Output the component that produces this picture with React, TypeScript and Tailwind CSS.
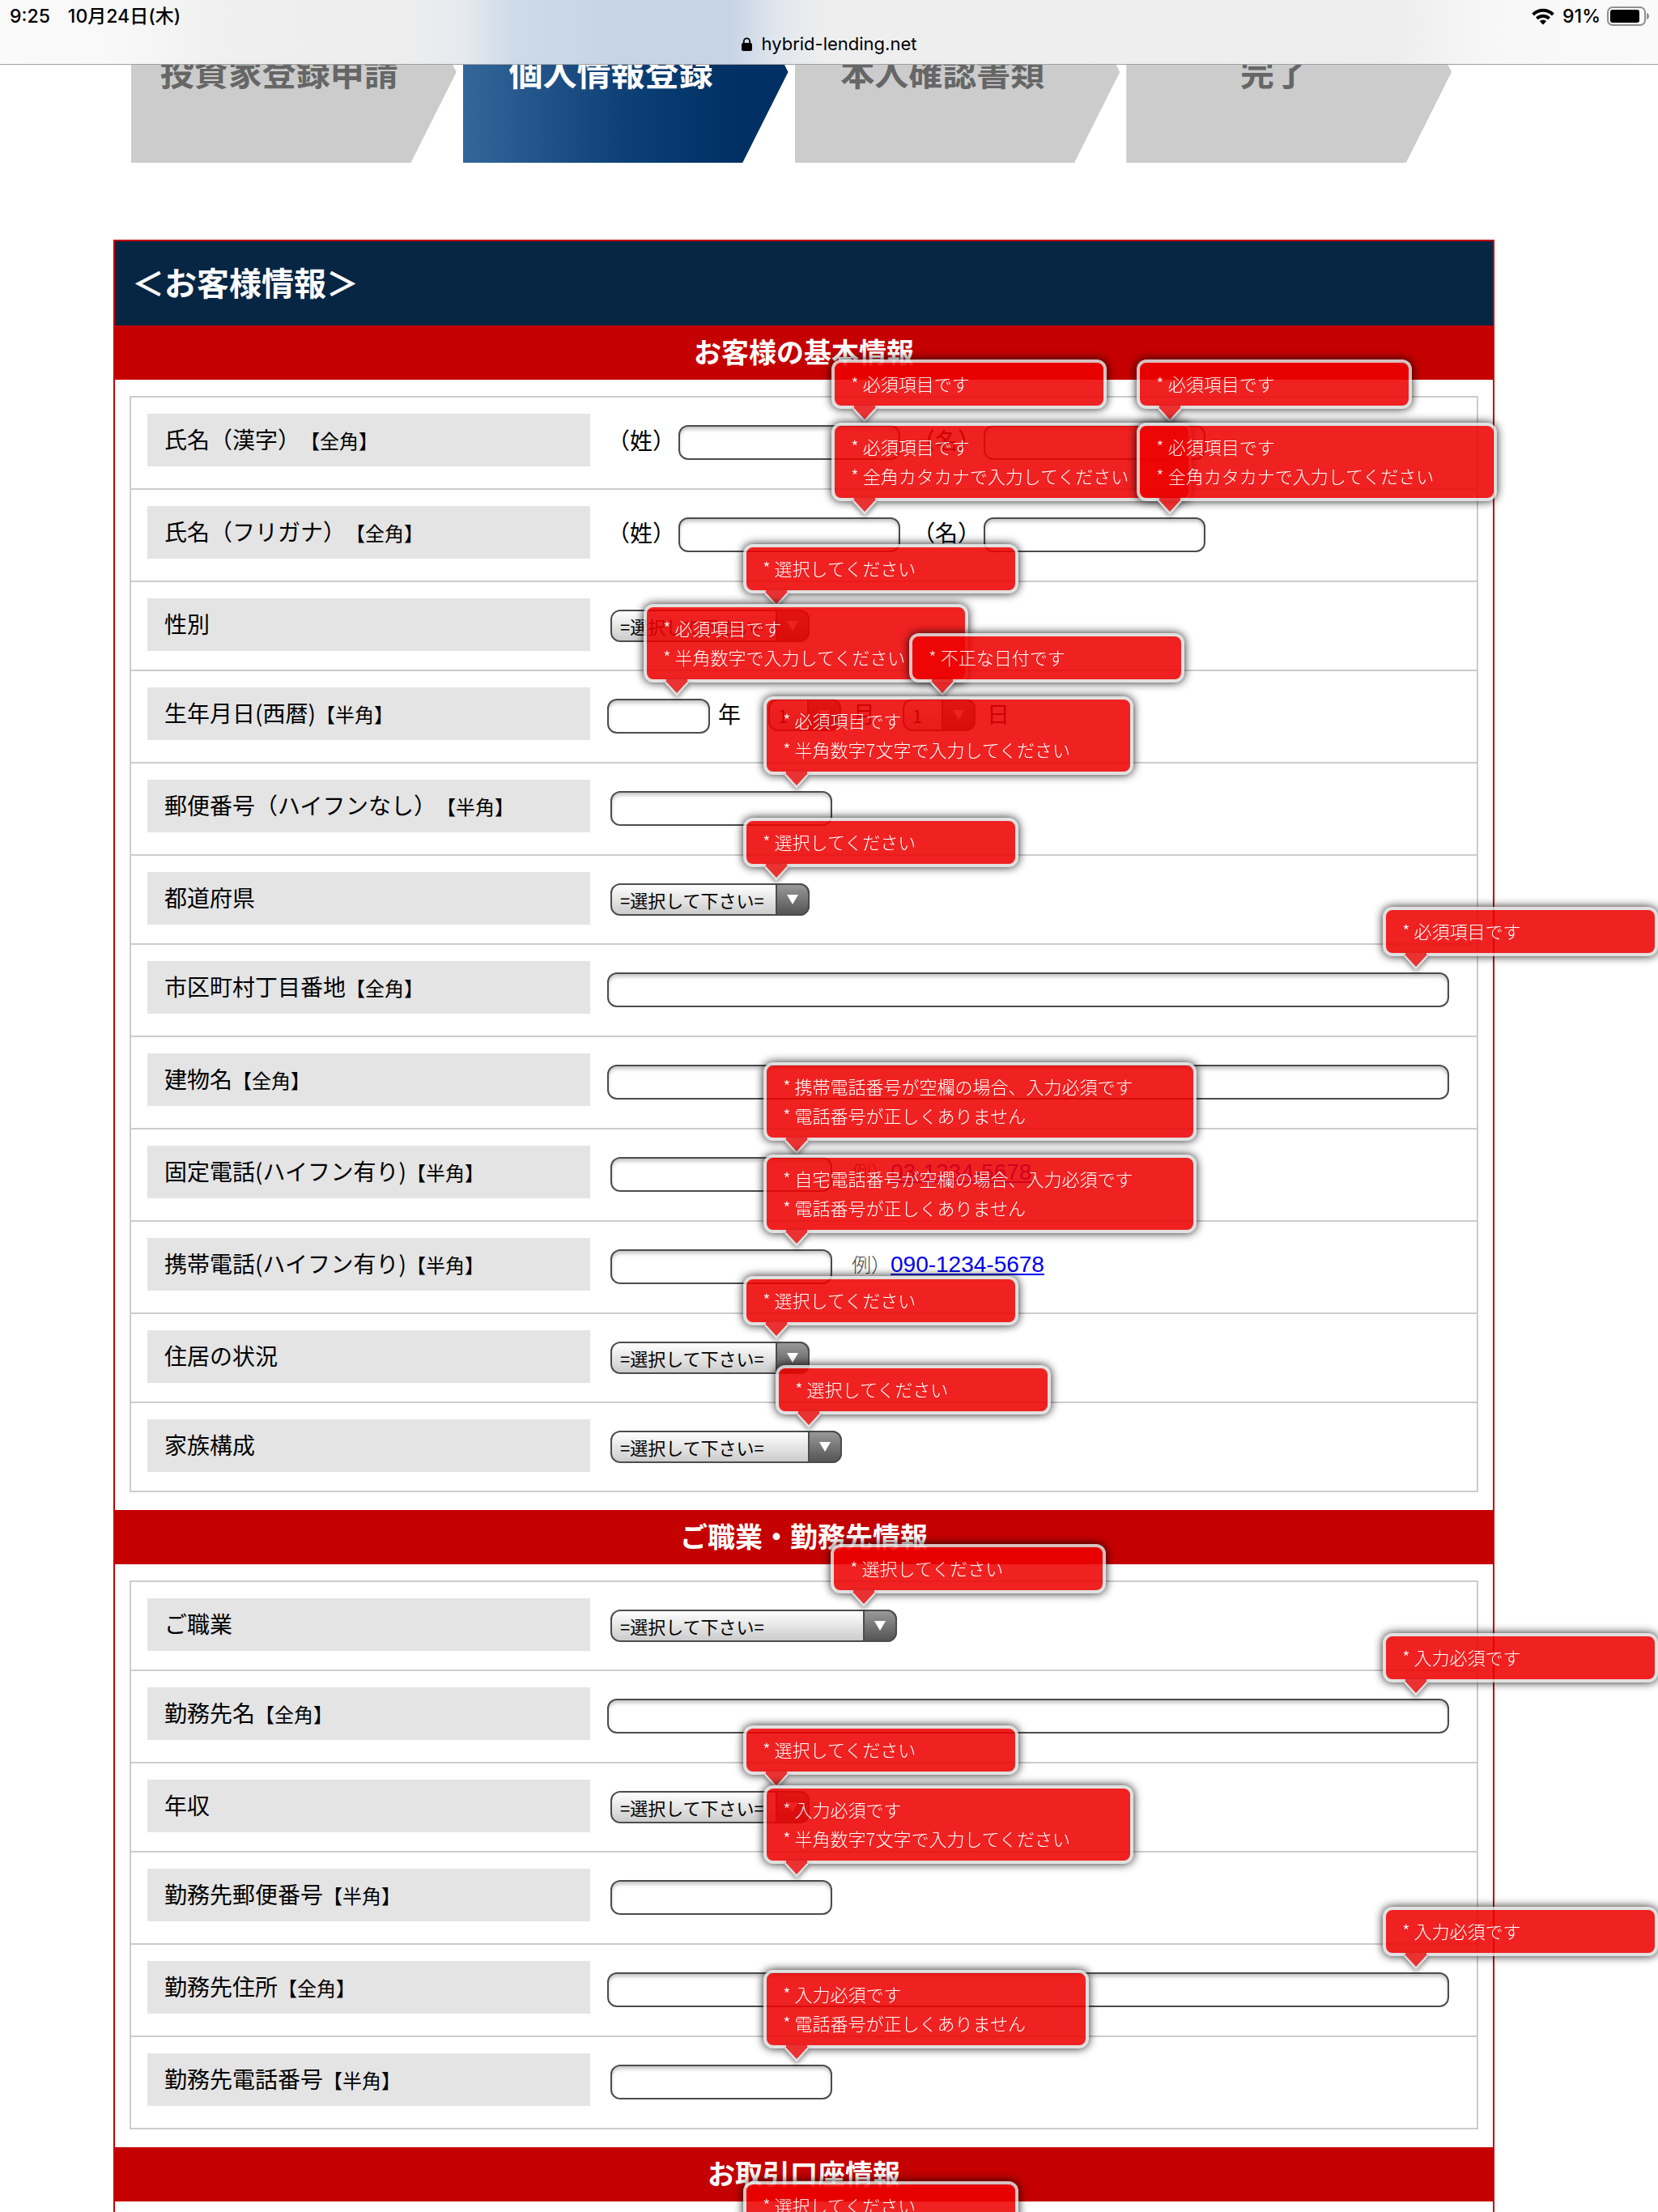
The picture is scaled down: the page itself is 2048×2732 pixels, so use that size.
import { createContext, useContext, useId, type ReactNode } from "react";

const FieldId = createContext<string | undefined>(undefined);

type TipProps = { lines: string[]; shift?: "near" | "far" };

function Tip({ lines, shift = "near" }: TipProps) {
  return (
    <div
      role="alert"
      className={`absolute bottom-[calc(100%+20px)] z-10 opacity-[0.87] ${
        shift === "far" ? "left-[calc(100%-85px)]" : "left-[calc(100%-82px)]"
      }`}
    >
      <div className="min-w-[340px] rounded-xl border-4 border-[#dddddd] bg-[#ee0101] pt-[7px] pr-[74px] pb-[10px] pl-5 text-[22px] leading-9 font-light whitespace-nowrap text-white shadow-[0_0_12px_#000000]">
        {lines.map((line) => (
          <p key={line}>* {line}</p>
        ))}
      </div>
      <svg
        className="absolute top-[calc(100%-4px)] left-[26px] drop-shadow-[0_3px_3px_rgba(0,0,0,0.5)]"
        width="30"
        height="21"
        viewBox="0 0 30 21"
        aria-hidden="true"
      >
        <path d="M0 4h30L15 21z" fill="#dddddd" />
        <path d="M2 0h26v3L15 17 2 3z" fill="#e81414" />
      </svg>
    </div>
  );
}

const inputBox =
  "block h-[43px] rounded-xl border-2 border-[#4c4c4c] bg-white px-2 text-[22px] shadow-[inset_0_4px_5px_-1px_rgba(0,0,0,0.25)]";

function TextField({ size = "medium", name, tip }: { size?: "short" | "medium" | "full"; name?: string; tip?: string[] }) {
  const id = useContext(FieldId);
  const outer = size === "full" ? "flex-1 mr-[34px]" : size === "short" ? "w-[127px]" : "ml-1 w-[274px]";
  return (
    <div className={`relative ${outer}`}>
      <input id={name ? undefined : id} aria-label={name} type="text" className={`${inputBox} w-full`} />
      {tip && <Tip lines={tip} shift={size === "medium" ? "far" : "near"} />}
    </div>
  );
}

function SelectField({
  size = "medium",
  name,
  option = "=選択して下さい=",
  tip,
}: {
  size?: "tiny" | "medium" | "large" | "wide";
  name?: string;
  option?: string;
  tip?: string[];
}) {
  const id = useContext(FieldId);
  const widths = { tiny: "w-[90px]", medium: "ml-1 w-[246px]", large: "ml-1 w-[286px]", wide: "ml-1 w-[354px]" };
  return (
    <div className={`relative ${widths[size]}`}>
      <select
        id={name ? undefined : id}
        aria-label={name}
        className="block h-10 w-full appearance-none rounded-xl border-2 border-[#4c4c4c] bg-linear-to-b from-white to-[#cccccc] pl-[10px] text-[22px] text-black"
      >
        <option>{option}</option>
      </select>
      <span className="pointer-events-none absolute inset-y-0 right-0 flex w-[42px] items-center justify-center rounded-r-xl border-2 border-[#4c4c4c] bg-linear-to-b from-[#999999] to-[#555555]">
        <svg width="14" height="12" viewBox="0 0 14 12" aria-hidden="true">
          <path d="M0 0h14L7 12z" fill="#ffffff" />
        </svg>
      </span>
      {tip && <Tip lines={tip} />}
    </div>
  );
}

function Row({ label, note, low, children }: { label: string; note?: string; low?: boolean; children: ReactNode }) {
  const id = useId();
  return (
    <FieldId.Provider value={id}>
      <div className={`flex items-start pt-5 pl-5 ${low ? "pb-[23px]" : "pb-[27px]"}`}>
        <label
          htmlFor={id}
          className="block h-[65px] w-[547px] shrink-0 bg-[#e4e4e4] px-[21px] text-[28px] leading-[63px] [text-spacing-trim:space-all]"
        >
          {label}
          {note && <span className="text-[24px]">【{note}】</span>}
        </label>
        <div className="ml-[21px] flex flex-1 items-start pt-[14px] text-[28px] leading-9">{children}</div>
      </div>
    </FieldId.Provider>
  );
}

function Section({ title, children }: { title: string; children: ReactNode }) {
  return (
    <section className="pb-[22px]">
      <h2 className="flex h-[67px] items-center justify-center bg-[#c40000] pb-1 text-[34px] font-bold text-white">
        {title}
      </h2>
      <div className="mt-5 mr-[18px] ml-[18px] divide-y-2 divide-[#cccccc] border-2 border-[#cccccc]">{children}</div>
    </section>
  );
}

const REQUIRED = "必須項目です";
const INPUT_NEEDED = "入力必須です";
const CHOOSE = "選択してください";
const BAD_PHONE = "電話番号が正しくありません";
const KATAKANA = "全角カタカナで入力してください";
const ZIP = "半角数字7文字で入力してください";

function NamePair({ tip }: { tip: string[] }) {
  return (
    <>
      <span>（姓）</span>
      <TextField name="姓" tip={tip} />
      <span className="ml-[15px]">（名）</span>
      <TextField name="名" tip={tip} />
    </>
  );
}

function Example({ phone }: { phone: string }) {
  return (
    <span className="ml-6 text-[24px] font-light text-[#444444]">
      例）
      <a
        href={`tel:${phone}`}
        className="font-['Liberation_Sans',sans-serif] text-[28px] font-normal text-[#0000ee] underline underline-offset-2"
      >
        {phone}
      </a>
    </span>
  );
}

function StatusBar() {
  return (
    <header className="relative z-20 h-20 border-b border-[#a0a0a0] bg-[linear-gradient(90deg,#fafafa_0%,#f8f8f8_7%,#efefef_14%,#ededed_24%,#e6eaee_28%,#ccdae9_31%,#c6d4e6_37%,#c6d4e6_44%,#e2e7ed_47%,#eeeeee_50%,#ededed_84%,#f7f7f7_90%,#fafafa_100%)] font-['Inter','Noto_Sans_CJK_JP',sans-serif] text-black">
      <div className="flex h-10 items-center justify-between pr-[10px] pl-3 text-[23px] font-medium">
        <div className="flex gap-[22px]">
          <span>9:25</span>
          <span>10月24日(木)</span>
        </div>
        <div className="flex items-center gap-2">
          <div className="flex items-center gap-[10px]">
            <svg width="28" height="21" viewBox="0 0 28 21" aria-hidden="true">
              <g fill="none" stroke="#000000" strokeWidth="4">
                <path d="M1.6 8a17.5 17.5 0 0 1 24.8 0" />
                <path d="M6.4 12.8a10.8 10.8 0 0 1 15.2 0" />
              </g>
              <path d="M9.8 16.3a6 6 0 0 1 8.4 0L14 20.5z" fill="#000000" />
            </svg>
            <span>91%</span>
          </div>
          <svg width="53" height="24" viewBox="0 0 53 24" aria-hidden="true">
            <rect x="1" y="1" width="46" height="22" rx="6" fill="none" stroke="#8f8f8f" strokeWidth="2" />
            <rect x="4" y="4" width="36" height="16" rx="3" fill="#000000" />
            <path d="M49 8c4 1 4 7 0 8z" fill="#8f8f8f" />
          </svg>
        </div>
      </div>
      <div className="flex h-7 items-center justify-center gap-3 text-[22px]">
        <svg width="13" height="17" viewBox="0 0 13 17" aria-hidden="true">
          <rect x="0" y="7" width="13" height="10" rx="2" fill="#000000" />
          <path d="M2.8 8V5a3.7 3.7 0 0 1 7.4 0v3" fill="none" stroke="#000000" strokeWidth="1.8" />
        </svg>
        <span>hybrid-lending.net</span>
      </div>
    </header>
  );
}

const steps = [
  { title: "投資家登録申請", current: false },
  { title: "個人情報登録", current: true },
  { title: "本人確認書類", current: false },
  { title: "完了", current: false },
];

export default function App() {
  return (
    <div className="h-screen overflow-hidden bg-white font-['Noto_Sans_CJK_JP',sans-serif] text-black">
      <StatusBar />
      <main>
        <ol className="-mt-[103px] mr-[255px] ml-[162px] flex gap-2">
          {steps.map((step) => (
            <li
              key={step.title}
              aria-current={step.current ? "step" : undefined}
              className={`flex h-[224px] flex-1 items-center justify-center pr-9 pb-1 text-[42px] font-bold whitespace-nowrap [clip-path:polygon(0_0,86%_0,100%_50%,86%_100%,0_100%)] ${
                step.current
                  ? "bg-linear-to-r from-[#336699] via-[#0d4076] via-50% to-[#003063] to-85% text-white"
                  : "bg-[#cccccc] text-[#666666]"
              }`}
            >
              {step.title}
            </li>
          ))}
        </ol>

        <form className="mt-[95px] mr-[202px] ml-[140px] border-2 border-[#c40000]">
          <h1 className="flex h-[104px] items-center bg-[#072644] pb-1 pl-[21px] text-[40px] font-bold text-white">
            ＜お客様情報＞
          </h1>

          <Section title="お客様の基本情報">
            <Row label="氏名（漢字）" note="全角">
              <NamePair tip={[REQUIRED]} />
            </Row>
            <Row label="氏名（フリガナ）" note="全角">
              <NamePair tip={[REQUIRED, KATAKANA]} />
            </Row>
            <Row label="性別" low>
              <SelectField tip={[CHOOSE]} />
            </Row>
            <Row label="生年月日(西暦)" note="半角">
              <TextField size="short" tip={[REQUIRED, "半角数字で入力してください"]} />
              <span className="mr-[34px] ml-[10px]">年</span>
              <SelectField size="tiny" name="月" option="1" />
              <span className="mr-[34px] ml-[14px]">月</span>
              <SelectField size="tiny" name="日" option="1" tip={["不正な日付です"]} />
              <span className="ml-[14px]">日</span>
            </Row>
            <Row label="郵便番号（ハイフンなし）" note="半角">
              <TextField tip={[REQUIRED, ZIP]} />
            </Row>
            <Row label="都道府県" low>
              <SelectField tip={[CHOOSE]} />
            </Row>
            <Row label="市区町村丁目番地" note="全角">
              <TextField size="full" tip={[REQUIRED]} />
            </Row>
            <Row label="建物名" note="全角">
              <TextField size="full" />
            </Row>
            <Row label="固定電話(ハイフン有り)" note="半角">
              <TextField tip={["携帯電話番号が空欄の場合、入力必須です", BAD_PHONE]} />
              <Example phone="03-1234-5678" />
            </Row>
            <Row label="携帯電話(ハイフン有り)" note="半角">
              <TextField tip={["自宅電話番号が空欄の場合、入力必須です", BAD_PHONE]} />
              <Example phone="090-1234-5678" />
            </Row>
            <Row label="住居の状況" low>
              <SelectField tip={[CHOOSE]} />
            </Row>
            <Row label="家族構成" low>
              <SelectField size="large" tip={[CHOOSE]} />
            </Row>
          </Section>

          <Section title="ご職業・勤務先情報">
            <Row label="ご職業" low>
              <SelectField size="wide" tip={[CHOOSE]} />
            </Row>
            <Row label="勤務先名" note="全角">
              <TextField size="full" tip={[INPUT_NEEDED]} />
            </Row>
            <Row label="年収" low>
              <SelectField tip={[CHOOSE]} />
            </Row>
            <Row label="勤務先郵便番号" note="半角">
              <TextField tip={[INPUT_NEEDED, ZIP]} />
            </Row>
            <Row label="勤務先住所" note="全角">
              <TextField size="full" tip={[INPUT_NEEDED]} />
            </Row>
            <Row label="勤務先電話番号" note="半角">
              <TextField tip={[INPUT_NEEDED, BAD_PHONE]} />
            </Row>
          </Section>

          <Section title="お取引口座情報">
            <Row label="" low>
              <SelectField name="お取引口座" tip={[CHOOSE]} />
            </Row>
          </Section>
        </form>
      </main>
    </div>
  );
}
